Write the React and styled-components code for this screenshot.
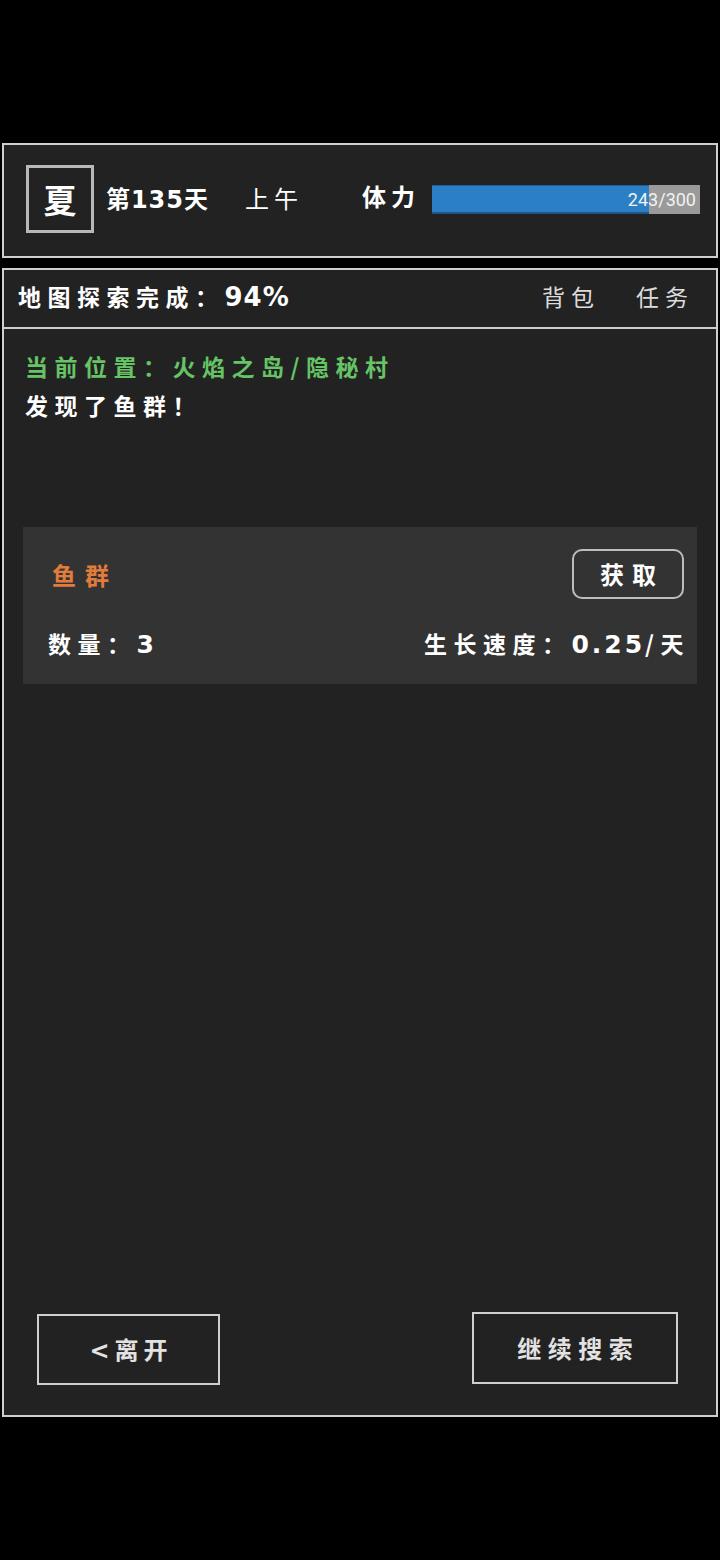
import styled, { createGlobalStyle } from "styled-components"

const GlobalStyle = createGlobalStyle`
  html, body {
    margin: 0;
    padding: 0;
    background: #000;
  }
  body {
    font-family: "Noto Sans CJK SC", "Noto Sans", sans-serif;
    color: #fff;
    text-spacing-trim: space-all;
  }
  * {
    box-sizing: border-box;
  }
`

const Screen = styled.div`
  width: 720px;
  height: 1560px;
  padding-top: 143px;
  background: #000;
`

const Panel = styled.div`
  margin: 0 2px;
  background: #222;
  border: 2px solid #cfcfcf;
`

const Num = styled.span`
  font-family: "DejaVu Sans", sans-serif;
  font-weight: 700;
  font-size: ${(p) => p.$size || "1em"};
  letter-spacing: ${(p) => (p.$ls !== undefined ? `${p.$ls}px` : "inherit")};
`

const StatusBar = styled(Panel)`
  height: 115px;
  display: flex;
  align-items: center;
  padding: 0 16px 3px 22px;
`

const Season = styled.div`
  width: 68px;
  height: 68px;
  border: 3px solid #b8b8b8;
  display: flex;
  align-items: center;
  justify-content: center;
  font-size: 33px;
  font-weight: 700;
`

const Day = styled.span`
  margin-left: 12px;
  margin-top: -4px;
  font-size: 24px;
  font-weight: 700;
  letter-spacing: 1px;
  white-space: nowrap;
`

const Time = styled.span`
  margin-left: 36px;
  margin-top: -4px;
  font-size: 24px;
  letter-spacing: 5px;
  white-space: nowrap;
`

const Label = styled.span`
  margin-left: 59px;
  margin-top: -7px;
  font-size: 24px;
  font-weight: 700;
  letter-spacing: 5px;
  white-space: nowrap;
`

const Bar = styled.div`
  position: relative;
  margin-left: 12px;
  width: 268px;
  flex-shrink: 0;
  height: 29px;
  background: #9a9a9a;
`

const BarFill = styled.div`
  height: 100%;
  background: #2b80c5;
  border-top: 1px solid #245f90;
  border-bottom: 2px solid #1f5688;
`

const BarText = styled.span`
  position: absolute;
  right: 4px;
  top: 0;
  bottom: 0;
  display: flex;
  align-items: center;
  font-family: Roboto, "Liberation Sans", sans-serif;
  font-size: 18px;
  color: #f2f2f2;
`

const Header = styled(Panel)`
  margin-top: 10px;
  height: 59px;
  border-bottom: none;
  display: flex;
  align-items: center;
  padding: 0 28px 6px 14px;
`

const Progress = styled.span`
  font-size: 23px;
  font-weight: 700;
  letter-spacing: 6.5px;
  flex: 1;
  white-space: nowrap;
`

const NavLink = styled.span`
  font-size: 23px;
  color: #dcdcdc;
  letter-spacing: 6px;
  margin-left: ${(p) => p.$gap}px;
  margin-right: -6px;
`

const Main = styled(Panel)`
  height: 1090px;
  display: flex;
  flex-direction: column;
  padding: 18px 19px 30px;
`

const Line = styled.div`
  height: 39px;
  line-height: 39px;
  padding-left: 2px;
  font-size: 23px;
  font-weight: 700;
  letter-spacing: 6.5px;
  white-space: nowrap;
  color: ${(p) => p.$color || "#fff"};
`

const Card = styled.div`
  margin-top: 102px;
  height: 157px;
  background: #333;
  padding: 22px 13px 0 25px;
  display: flex;
  flex-direction: column;
`

const Row = styled.div`
  display: flex;
  align-items: center;
  justify-content: space-between;
  height: ${(p) => p.$h}px;
  margin-top: ${(p) => p.$mt || 0}px;
`

const Title = styled.span`
  margin-left: 4px;
  font-size: 24px;
  font-weight: 700;
  color: #e27c3c;
  letter-spacing: 9px;
`

const GetButton = styled.button`
  width: 112px;
  height: 50px;
  border: 2px solid #bdbdbd;
  border-radius: 10px;
  background: transparent;
  color: #fff;
  font-family: inherit;
  font-size: 24px;
  font-weight: 700;
  letter-spacing: 8px;
  padding: 0 0 2px 8px;
`

const Stat = styled.span`
  font-size: 23px;
  font-weight: 700;
  letter-spacing: 6.5px;
  white-space: nowrap;
  margin-right: ${(p) => p.$mr || 0}px;
`

const Footer = styled.div`
  margin-top: auto;
  display: flex;
  justify-content: space-between;
  align-items: flex-start;
  padding: 0 19px 0 14px;
`

const ActionButton = styled.button`
  width: ${(p) => p.$w}px;
  height: ${(p) => p.$h}px;
  margin-top: ${(p) => p.$mt || 0}px;
  border: 2px solid #cfcfcf;
  background: transparent;
  color: #e2e2e2;
  font-family: inherit;
  font-size: 24px;
  font-weight: 700;
  letter-spacing: ${(p) => p.$ls}px;
  padding: 0 0 2px ${(p) => p.$ls}px;
`

function App() {
  const stamina = 243
  const maxStamina = 300

  return (
    <Screen>
      <GlobalStyle />
      <StatusBar>
        <Season>夏</Season>
        <Day>第<Num>135</Num>天</Day>
        <Time>上午</Time>
        <Label>体力</Label>
        <Bar>
          <BarFill style={{ width: `${(stamina / maxStamina) * 100}%` }} />
          <BarText>{stamina}/{maxStamina}</BarText>
        </Bar>
      </StatusBar>
      <Header>
        <Progress>地图探索完成：<Num $size="26px" $ls={1}>94%</Num></Progress>
        <NavLink $gap={0}>背包</NavLink>
        <NavLink $gap={42}>任务</NavLink>
      </Header>
      <Main>
        <Line $color="#66c466">当前位置：火焰之岛/隐秘村</Line>
        <Line>发现了鱼群！</Line>
        <Card>
          <Row $h={50}>
            <Title>鱼群</Title>
            <GetButton>获取</GetButton>
          </Row>
          <Row $h={30} $mt={29}>
            <Stat>数量：<Num $size="25px">3</Num></Stat>
            <Stat $mr={-6}>生长速度：<Num $size="25px" $ls={3}>0.25</Num>/天</Stat>
          </Row>
        </Card>
        <Footer>
          <ActionButton $w={183} $h={71} $mt={2} $ls={5}><Num>&lt;</Num>离开</ActionButton>
          <ActionButton $w={206} $h={72} $ls={6.5}>继续搜索</ActionButton>
        </Footer>
      </Main>
    </Screen>
  )
}

export default App
